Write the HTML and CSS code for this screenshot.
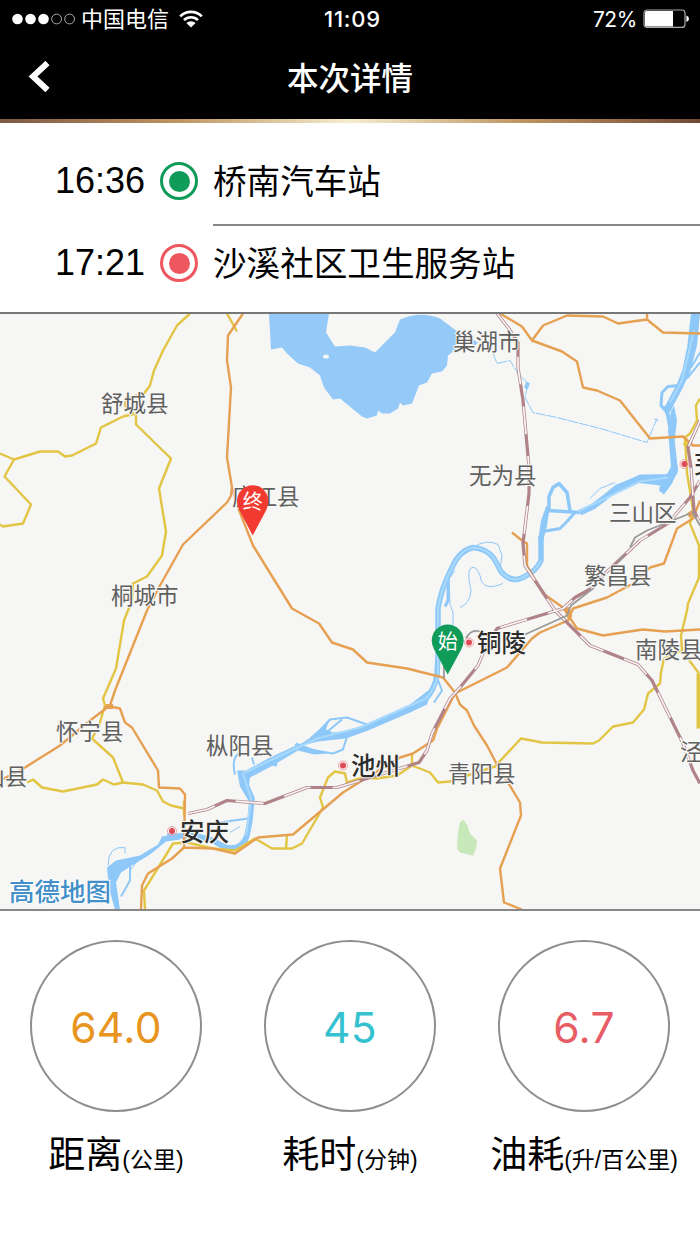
FILE: index.html
```
<!DOCTYPE html>
<html lang="zh-CN">
<head>
    <meta charset="UTF-8">
    <meta name="viewport" content="width=device-width, initial-scale=1.0">
    <title>本次详情</title>
    <link rel="stylesheet" href="styles.css">
</head>
<body>
    <header class="header">
        <div class="status-bar">
            <div class="status-left">
                <svg class="signal" width="64" height="12" viewBox="0 0 64 12">
                    <g fill="#fff">
                        <circle cx="5.5" cy="6" r="5.3"/>
                        <circle cx="18.5" cy="6" r="5.3"/>
                        <circle cx="31.5" cy="6" r="5.3"/>
                    </g>
                    <g fill="none" stroke="#aaa" stroke-width="1">
                        <circle cx="44.6" cy="6" r="4.9"/>
                        <circle cx="57.6" cy="6" r="4.9"/>
                    </g>
                </svg>
                <span class="carrier">中国电信</span>
                <svg class="wifi" width="24" height="18" viewBox="0 0 24 18">
                    <g fill="none" stroke="#fff" stroke-width="2.6">
                        <path d="M1.2 6.3A15.3 15.3 0 0 1 22.8 6.3"/>
                        <path d="M5 10.2A9.9 9.9 0 0 1 19 10.2"/>
                    </g>
                    <path fill="#fff" d="M12 17.4L7.4 13A6.6 6.6 0 0 1 16.6 13Z"/>
                </svg>
            </div>
            <span class="clock">11:09</span>
            <div class="status-right">
                <span class="percent">72%</span>
                <svg width="47" height="20" viewBox="0 0 47 20">
                    <rect x="1" y="1" width="41" height="17.4" rx="3" fill="none" stroke="#aaa" stroke-width="1.2"/>
                    <path d="M3.5 2H30V17.4H3.5Q2 17.4 2 15.9V3.5Q2 2 3.5 2Z" fill="#fff"/>
                    <path d="M43.4 6.5Q46 7.5 46 9.7T43.4 12.9Z" fill="#fff"/>
                </svg>
            </div>
        </div>
        <div class="nav-bar">
            <svg class="back" width="24" height="32" viewBox="0 0 24 32">
                <path d="M19.5 2L5 15.5L19.5 29" fill="none" stroke="#fff" stroke-width="6"/>
            </svg>
            <h1>本次详情</h1>
        </div>
    </header>

    <section class="route">
        <div class="stop">
            <span class="time">16:36</span>
            <span class="dot dot-start"></span>
            <span class="place">桥南汽车站</span>
        </div>
        <div class="stop">
            <span class="time">17:21</span>
            <span class="dot dot-end"></span>
            <span class="place last">沙溪社区卫生服务站</span>
        </div>
    </section>

    <section class="map">
        <svg width="700" height="595" viewBox="0 313.5 700 595">
            <!-- lake and park -->
            <path class="lake" d="M269 313L271 349L282 347L287 353L298 363L310 367L320 375L324 387L333 399L340 398L362 416L367 418L377 415L378 410L382 413L390 413L398 408L400 402L403 405L412 403L419 385L427 382L432 373L442 371L447 365L448 355L460 346L460 333L440 318Q420 310 400 319L395 332L375 352L365 347L350 345L335 346L326 332L329 313Z"/>
            <path class="lake" d="M473 339L478 342L475 345L471 343Z"/>
            <ellipse cx="326" cy="356" rx="3" ry="2" fill="#f6f6f4"/>
            <path class="park" d="M458 832L460 822L463 819L467 824L470 833L477 840L476 848L473 855L460 852L457 848Z"/>

            <!-- river -->
            <g class="river-area">
                <path d="M691 313H700L697 345L690 372L682 388L676 392L684 365L687 348Z"/>
                <path d="M671 411L674 405L677 420L674 446L678 470L672 483L664 494L659 490L660 485L635 482L620 490L604 500L614 486L640 474L667 474L671 466L668 430Z"/>
                <path d="M546 506L550 505L547 525L543 541L538 541L541 520Z"/>
                <path d="M432 687L427 704L410 712L368 730L346 738L318 741L295 747L317 733L345 731L368 723L410 704Z"/>
                <path d="M330 718L318 730L310 737L322 738L332 731L326 729Z"/>
                <path d="M296 742L312 748L328 753L314 754L298 750Z"/>
                <path d="M237 770L246 770L270 757L296 745L298 750L271 766L250 777L249 785L254 797L249 801L240 786Z"/>
                <path d="M107 867L116 860L140 855L158 844L162 836L180 833V839L166 841L150 854L132 865L121 872L116 882L120 909H115L109 888Z"/>
                <path d="M222 842L235 848L248 838V844L240 849L225 850Z"/>
            </g>
            <g class="river">
                <path stroke-width="7" d="M690 350L686 370L680 385L672 400L667 410"/>
                <path stroke-width="4" d="M666 405L670 425L673 443L676 470Q674 477 667 477"/>
                <path stroke-width="3" d="M680 385L668 386L662 392L661 405L667 412"/>
                <path stroke-width="2" d="M700 362L687 378M700 352L691 367"/>
                <path stroke-width="6" d="M675 471L667 477L655 477L640 478L617 487L605 497L593 506L580 512"/>
                <path stroke-width="3.500" d="M580 512L548 510M549 512L549 496L553 487L559 483L567 492L570 510"/>
                <path stroke-width="3" d="M575 512L566 522L560 528L543 531"/>
                <path stroke-width="5.500" d="M541 535L541 560Q537 570 523 577Q511 583 501 571L494 558Q487 548 473 547Q460 550 453 565Q441 588 438 608L438 655L437 675Q434 690 426 698"/>
                <path stroke-width="5.500" d="M243 778L252 798L250 820L247 835Q242 850 225 847L213 840L195 835L167 836"/>
                <path stroke-width="2" d="M313 738L330 719L347 717L367 724M298 747L333 753L343 749L348 733M295 744L312 752M437 677L442 690L434 702M325 733L342 719"/>
                <path stroke-width="2" d="M220 822L248 818M217 825L232 820M240 752Q231 757 235 774M252 757L254 764M268 763L276 765L277 758M130 860L130 880L121 896"/>
                <path stroke-width="1" d="M108 865Q108 845 125 847L125 853M130 870L137 861M473 547Q486 538 498 544L502 555L500 568M460 607Q470 603 471 590Q466 568 472 567Q476 565 480 575Q482 592 503 583M449 576L450 604L453 612L453 625M455 570L448 580M590 498L600 488L615 482M230 832L240 826"/>
                <path stroke-width="3" d="M448 580L448 600L445 606"/>
                <path stroke-width="1" stroke-dasharray="10 1" d="M493 353L497 363L510 360L518 373L528 383L525 397L533 412L557 417L604 429L647 442L657 418M654 418L658 421"/>
                <path stroke-width="4" d="M528 382L526 388"/>
            </g>
            <g class="river-light">
                <path d="M694 330L682 380L670 402M668 477L640 481L605 498L578 511M541 560Q537 570 523 577Q511 583 501 571L494 558Q487 548 473 547Q460 550 453 565Q441 588 438 608L438 675Q434 690 426 698L360 727L317 738L270 760L243 773L251 798L246 835"/>
            </g>

            <!-- provincial roads -->
            <g class="road yellow">
                <path d="M190 313L177 325L163 350L154 370L150 385L144 393L126 398L125 405L135 414"/>
                <path d="M136 413L123 416L101 427L96 443L72 455L65 456L58 451L40 451L14 459L0 453M14 459L4.500 476L31 504L23 523L3 526L0 524"/>
                <path d="M136 413L136 424L171 458L159 488L166 531L162 555L147 576L133 583L132 600L128 610L124 620L116 668L103 698L105 705L99 725L92 738L113 757L123 782"/>
                <path d="M227 313L237 331M27 782L33 779L42 787L63 791L97 784L103 779L114 784L123 782L143 784L157 790L163 801L171 805L184 808M184 800L184 815"/>
                <path d="M145 909L144 890L173 843L187 842L213 848L235 850L255 838L272 848L292 848L302 843L323 807L320 797L328 777L335 771L345 773L347 782L363 777L377 778L397 775L412 765L430 772L438 782L450 781L467 775L495 766L521 738L542 742L593 743L599 740L613 726L633 722L644 709L648 693L660 683L661 672L664 658L682 650"/>
                <path d="M412 753L412 765M287 835L286 848M700 398L696 405L697 420L690 433L685 437L686 455L687 473L690 490L693 510L690 523L699 545L699 577L688 603L687 610L681 635L682 650L699 673"/>
                <path stroke-width="5" d="M684 445L688 442M699 673L699 728"/>
            </g>

            <!-- motorways -->
            <g class="road orange">
                <path d="M243 313L228 335L227 360L231 387L227 457L232 487L238 507L253 545L292 608L319 623L332 642L353 649L367 662L407 668L443 677L455 692L460 704L467 710L474 725L487 745L497 764L508 782L520 802L521 815L500 868L504 902L522 909"/>
                <path d="M232 487L231 495L227 502L183 544L160 585L147 610L115 690L110 705L90 720L60 745L25 767L0 780"/>
                <path d="M104 707L110 706L120 708L125 722L132 727L158 770L159 787L180 788L185 794L184 847L172 858L148 873L142 885L141 909M184 847L213 848L235 853L258 837L293 834L343 792L367 777L400 757L413 753L433 740L437 728L455 693L507 667L532 638L540 632L568 620L573 608L607 597L633 583L650 567L664 563L677 528L693 518L700 500"/>
                <path d="M500 313L522 326L532 340L562 351L577 361L583 387L597 390L620 400L650 438L683 436L693 445L700 445M532 340L543 325L567 315L603 316L618 323L647 319L663 332L700 333M647 313L647 319"/>
                <path d="M512 532L522 540L527 543L527 565L543 593L563 607L577 628L603 635L643 629L665 631L700 629"/>
                <path stroke-width="5" d="M106 706L113 706M567 607L570 617M688 515L693 512"/>
            </g>

            <!-- railways -->
            <g class="rail">
                <path d="M497 313L508 327L518 342L518 367L523 400L529 467L529 493L523 543L525 565L555 610L590 645L638 664L652 680L683 743L693 770L700 783"/>
                <path d="M188 813L207 809L227 800L265 803L307 787L337 787L367 778L419 762L427 750L432 733L450 698L460 687L478 665L483 653L497 628L550 612L563 608L575 597L593 587L605 573L640 540L668 523L690 497L700 480"/>
                <path d="M700 420L688 447L691 467L694 510L700 523"/>
            </g>
            <g class="rail-dash">
                <path d="M497 313L508 327L518 342L518 367L523 400L529 467L529 493L523 543L525 565L555 610L590 645L638 664L652 680L683 743L693 770L700 783"/>
                <path d="M188 813L207 809L227 800L265 803L307 787L337 787L367 778L419 762L427 750L432 733L450 698L460 687L478 665L483 653L497 628L550 612L563 608L575 597L593 587L605 573L640 540L668 523L690 497L700 480"/>
                <path d="M700 420L688 447L691 467L694 510L700 523"/>
            </g>
            <g class="rail-gray">
                <path d="M525 634L567 615L571 605L593 588M690 513L647 530L635 537L630 547M692 511L700 525M444 665L444 678M466 638Q471 628 480 631M618 562L623 555"/>
            </g>

            <!-- county names -->
            <g class="county">
                <text x="101" y="411">舒城县</text>
                <text x="111" y="603">桐城市</text>
                <text x="232" y="504">庐江县</text>
                <text x="453" y="349">巢湖市</text>
                <text x="469" y="483">无为县</text>
                <text x="609" y="520">三山区</text>
                <text x="584" y="583">繁昌县</text>
                <text x="635" y="657">南陵县</text>
                <text x="680" y="759">泾县</text>
                <text x="56" y="739">怀宁县</text>
                <text x="206" y="753">枞阳县</text>
                <text x="448" y="781">青阳县</text>
                <text x="-40" y="784">潜山县</text>
            </g>

            <!-- cities -->
            <g class="city">
                <text x="477" y="651">铜陵</text>
                <text x="351" y="774">池州</text>
                <text x="180" y="840">安庆</text>
                <text x="694" y="472">芜湖</text>
            </g>
            <g class="city-dot">
                <circle cx="469" cy="642" r="3"/>
                <circle cx="343" cy="765" r="3"/>
                <circle cx="172" cy="830.500" r="3"/>
                <circle cx="684.500" cy="463.500" r="3"/>
            </g>
            <g class="city-ring">
                <circle cx="469" cy="642" r="4.500"/>
                <circle cx="343" cy="765" r="4.500"/>
                <circle cx="172" cy="830.500" r="4.500"/>
                <circle cx="684.500" cy="463.500" r="4.500"/>
            </g>

            <text class="map-logo" x="9" y="900">高德地图</text>

            <!-- trip pins -->
            <g class="pin">
                <path fill="#f23a30" d="M252.700 535L239.500 510Q237 505 237 500.500A15.700 15.700 0 0 1 268.400 500.500Q268.400 505 266 510Z"/>
                <text x="252.700" y="508">终</text>
                <path fill="#109b59" d="M447.700 674L434.200 649Q431.700 644 431.700 640A16 16 0 0 1 463.700 640Q463.700 644 461.200 649Z"/>
                <text x="447.700" y="648">始</text>
            </g>
        </svg>
    </section>

    <section class="stats">
        <div class="stat">
            <div class="circle distance">64.0</div>
            <p>距离<small>(公里)</small></p>
        </div>
        <div class="stat">
            <div class="circle duration">45</div>
            <p>耗时<small>(分钟)</small></p>
        </div>
        <div class="stat">
            <div class="circle fuel">6.7</div>
            <p>油耗<small>(升/百公里)</small></p>
        </div>
    </section>
</body>
</html>
```
FILE: styles.css
```
* {
    box-sizing: border-box;
}

body {
    margin: 0;
    background-color: #fff;
    color: #000;
    font-family: "Liberation Sans", "Noto Sans CJK SC", sans-serif;
    overflow: hidden;
}

.header {
    height: 123px;
    background-color: #000;
    color: #fff;
    display: flex;
    flex-direction: column;
}

.header::after {
    content: "";
    height: 4px;
    margin-top: auto;
    background: linear-gradient(to right, #7d5844, #bd935f 25%, #f5edcf 50%, #bd935f 75%, #704936);
}

.status-bar {
    display: grid;
    grid-template-columns: 1fr auto 1fr;
    align-items: center;
    height: 38px;
    padding: 0 10px 0 12px;
    font-family: Inter, "Noto Sans CJK SC", sans-serif;
    font-size: 22px;
}

.status-left,
.status-right {
    display: flex;
    align-items: center;
}

.carrier {
    margin-left: 5px;
    line-height: 38px;
}

.wifi {
    margin-left: 10px;
}

.clock {
    font-weight: 500;
    letter-spacing: 0.8px;
    margin-left: 3px;
}

.status-right {
    justify-content: flex-end;
    gap: 6px;
}

.percent {
    font-size: 21px;
    letter-spacing: -0.4px;
    line-height: 34px;
    padding-top: 2px;
}

.nav-bar {
    display: grid;
    grid-template-columns: 60px 1fr 60px;
    align-items: center;
    height: 78px;
}

.back {
    margin: -3px 0 0 28px;
}

.nav-bar h1 {
    margin: 0;
    padding-top: 2px;
    font-size: 31.5px;
    font-weight: 500;
    line-height: 78px;
    text-align: center;
}

.route {
    height: 189px;
    padding-top: 21px;
}

.stop {
    display: flex;
    align-items: flex-start;
    height: 82px;
    padding-left: 55px;
}

.time {
    width: 105px;
    font-size: 36px;
    line-height: 74px;
}

.dot {
    width: 38px;
    height: 38px;
    margin-top: 18px;
    border: 3.6px solid;
    border-radius: 50%;
    padding: 5.5px;
    background-color: currentColor;
    background-clip: content-box;
}

.dot-start {
    color: #109b59;
}

.dot-end {
    color: #ee5660;
}

.place {
    flex: 1;
    height: 82px;
    margin-left: 15px;
    border-bottom: 2px solid #888;
    font-size: 33.6px;
    line-height: 77px;
}

.place.last {
    border-bottom: none;
}

.map {
    height: 599px;
    border-top: 2px solid #777;
    border-bottom: 2px solid #888;
    background-color: #f6f6f4;
    overflow: hidden;
}

.map svg {
    display: block;
}

.map path {
    stroke-linejoin: round;
}

.lake {
    fill: #94c9f8;
}

.park {
    fill: #c7e8b8;
}

.river-area {
    fill: #8dc8f8;
}

.river {
    fill: none;
    stroke: #8dc8f8;
}

.river-light {
    fill: none;
    stroke: #a9dafd;
    stroke-width: 2;
}

.road {
    fill: none;
    stroke-width: 2.4;
}

.yellow {
    stroke: #e2c544;
}

.orange {
    stroke: #e6a052;
}

.rail {
    fill: none;
    stroke: #af8388;
    stroke-width: 3.2;
}

.rail-dash {
    fill: none;
    stroke: #faf4f4;
    stroke-width: 1.7;
    stroke-dasharray: 28 22;
}

.rail-gray {
    fill: none;
    stroke: #999;
    stroke-width: 1.8;
}

.county {
    fill: #606060;
    font-size: 22.5px;
    paint-order: stroke;
    stroke: #f8f8f6;
    stroke-width: 2px;
}

.city {
    fill: #2c2c2c;
    font-size: 24.5px;
    font-weight: 500;
    paint-order: stroke;
    stroke: #f8f8f6;
    stroke-width: 2px;
}

.city-dot {
    fill: #df4c58;
}

.city-ring {
    fill: none;
    stroke: #efa4a8;
    stroke-width: 1;
}

.map-logo {
    fill: #438fc8;
    font-size: 25.5px;
    font-weight: 500;
    paint-order: stroke;
    stroke: #fff;
    stroke-width: 2px;
}

.pin text {
    fill: #fff;
    font-size: 20px;
    text-anchor: middle;
}

.stats {
    display: grid;
    grid-template-columns: repeat(3, 234px);
    justify-content: center;
    padding-top: 29px;
}

.stat {
    display: flex;
    flex-direction: column;
    align-items: center;
}

.circle {
    width: 172px;
    height: 172px;
    border: 2px solid #8e8e8e;
    border-radius: 50%;
    font-family: Inter, sans-serif;
    font-size: 42.5px;
    font-weight: 400;
    letter-spacing: 0.3px;
    line-height: 171px;
    text-align: center;
}

.distance {
    color: #e8951f;
}

.duration {
    color: #35c2d0;
}

.fuel {
    color: #e85c66;
}

.stat p {
    margin: 15px 0 0;
    font-size: 37px;
    line-height: 58px;
    white-space: nowrap;
}

.stat small {
    font-size: 23px;
}
```
